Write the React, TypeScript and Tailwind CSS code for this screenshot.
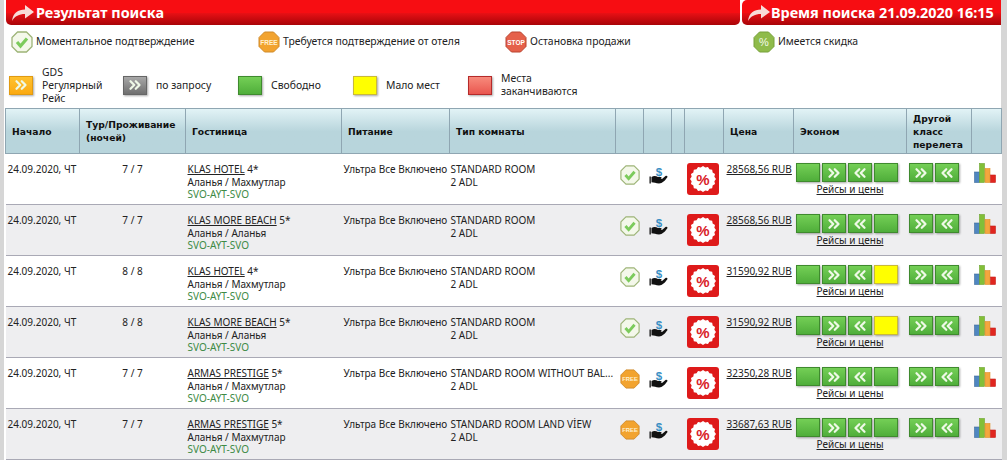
import { ChevronsLeft, ChevronsRight } from "lucide-react";

type Row = {
  nights: string;
  hotel: string;
  stars: string;
  area: string;
  room: string;
  status: "ok" | "free";
  price: string;
  last: "green" | "yellow";
};

const rows: Row[] = [
  { nights: "7 / 7", hotel: "KLAS HOTEL", stars: "4*", area: "Аланья / Махмутлар", room: "STANDARD ROOM", status: "ok", price: "28568,56 RUB", last: "green" },
  { nights: "7 / 7", hotel: "KLAS MORE BEACH", stars: "5*", area: "Аланья / Аланья", room: "STANDARD ROOM", status: "ok", price: "28568,56 RUB", last: "green" },
  { nights: "8 / 8", hotel: "KLAS HOTEL", stars: "4*", area: "Аланья / Махмутлар", room: "STANDARD ROOM", status: "ok", price: "31590,92 RUB", last: "yellow" },
  { nights: "8 / 8", hotel: "KLAS MORE BEACH", stars: "5*", area: "Аланья / Аланья", room: "STANDARD ROOM", status: "ok", price: "31590,92 RUB", last: "yellow" },
  { nights: "7 / 7", hotel: "ARMAS PRESTIGE", stars: "5*", area: "Аланья / Махмутлар", room: "STANDARD ROOM WITHOUT BAL...", status: "free", price: "32350,28 RUB", last: "green" },
  { nights: "7 / 7", hotel: "ARMAS PRESTIGE", stars: "5*", area: "Аланья / Махмутлар", room: "STANDARD ROOM LAND VİEW", status: "free", price: "33687,63 RUB", last: "green" },
];

const octagon = "6.5,1 15.5,1 21,6.5 21,15.5 15.5,21 6.5,21 1,15.5 1,6.5";

function scallop() {
  const pts: string[] = [];
  for (let i = 0; i < 32; i++) {
    const r = i % 2 === 0 ? 13 : 11.6;
    const a = (i / 32) * Math.PI * 2;
    pts.push(`${(16 + r * Math.cos(a)).toFixed(2)},${(16 + r * Math.sin(a)).toFixed(2)}`);
  }
  return pts.join(" ");
}

function HeaderArrow() {
  return (
    <svg width="24" height="18" viewBox="0 0 24 18" className="shrink-0">
      <path d="M1 17C2 9 7 5.500 14 5.500V1L23 8L14 14.500V10C8 10 4 12 1 17Z" fill="#f8dcd8" />
    </svg>
  );
}

function CheckIcon({ size = 22 }: { size?: number }) {
  return (
    <svg width={size} height={size} viewBox="0 0 22 22" className="shrink-0">
      <polygon points={octagon} fill="#f4f8ea" stroke="#9db477" strokeWidth="1.300" strokeLinejoin="round" />
      <path d="M6 11L9.500 15L16 7.500" fill="none" stroke="#7ccb5c" strokeWidth="3.200" />
    </svg>
  );
}

function FreeIcon({ size = 22 }: { size?: number }) {
  return (
    <svg width={size} height={size} viewBox="0 0 22 22" className="shrink-0">
      <polygon points={octagon} fill="#f2a32f" stroke="#cf8a2a" strokeLinejoin="round" />
      <text x="11" y="13.500" textAnchor="middle" fontSize="6.500" fontWeight="700" fill="#fff1cf" fontFamily="'Liberation Sans', sans-serif">FREE</text>
    </svg>
  );
}

function StopIcon() {
  return (
    <svg width="22" height="22" viewBox="0 0 22 22" className="shrink-0">
      <polygon points={octagon} fill="#e5604a" stroke="#b9432f" strokeLinejoin="round" />
      <text x="11" y="13.500" textAnchor="middle" fontSize="6.500" fontWeight="700" fill="#fff" fontFamily="'Liberation Sans', sans-serif">STOP</text>
    </svg>
  );
}

function PercentIcon() {
  return (
    <svg width="22" height="22" viewBox="0 0 22 22" className="shrink-0">
      <polygon points={octagon} fill="#8fbb4a" stroke="#77a03a" strokeLinejoin="round" />
      <text x="11" y="15" textAnchor="middle" fontSize="11" fill="#f4fae8" fontFamily="'Liberation Sans', sans-serif">%</text>
    </svg>
  );
}

function HandIcon() {
  return (
    <svg width="19" height="19" viewBox="0 0 19 19" className="shrink-0">
      <text x="10" y="9.500" textAnchor="middle" fontSize="11.500" fontWeight="700" fill="#3a8fc4" fontFamily="'Liberation Sans', sans-serif">$</text>
      <rect x="0.500" y="10.500" width="1.300" height="7" fill="#111" />
      <path d="M2.500 11C5 9.500 7 10 9 11L11.500 11C13 11 13 12.800 11.500 12.800L13 13L16.500 10C18 9.300 19 10.500 18.200 11.600C16 14.500 13.500 17.500 10 17.500C7 17.500 5 16.300 2.500 16.300Z" fill="#111" />
    </svg>
  );
}

function DiscountBadge() {
  return (
    <svg width="32" height="32" viewBox="0 0 32 32" className="shrink-0">
      <rect width="32" height="32" rx="3" fill="#de1a1a" />
      <polygon points={scallop()} fill="#fff" />
      <text x="16" y="21.500" textAnchor="middle" fontSize="15" fontWeight="700" fill="#d9222a" fontFamily="'Liberation Sans', sans-serif">%</text>
    </svg>
  );
}

function ChartIcon() {
  return (
    <svg width="22" height="20" viewBox="0 0 22 20" className="shrink-0">
      <rect x="0.500" y="9" width="5" height="10.500" fill="#4f86c0" stroke="#3c6a9c" strokeWidth="0.600" />
      <rect x="5.500" y="0.500" width="5" height="19" fill="#82bf38" stroke="#6aa32c" strokeWidth="0.600" />
      <rect x="11" y="5.500" width="5" height="14" fill="#f4a63e" stroke="#e08f2a" strokeWidth="0.600" />
      <rect x="16.500" y="12" width="5" height="7.500" fill="#e0261f" stroke="#c81f1a" strokeWidth="0.600" />
    </svg>
  );
}

function Box({ color, dir }: { color: "green" | "yellow" | "orange" | "gray" | "red"; dir?: "r" | "l" }) {
  const look = {
    green: "border-[#3f8a2e] bg-gradient-to-b from-[#74cf56] to-[#4fae3a]",
    yellow: "border-[#c9b93a] bg-[#ffff00]",
    orange: "border-[#e09a12] bg-gradient-to-b from-[#ffc22e] to-[#fba90f]",
    gray: "border-[#666666] bg-gradient-to-b from-[#a8a8a8] to-[#6f6f6f]",
    red: "border-[#b52a2a] bg-gradient-to-b from-[#f78a7c] to-[#e9554f]",
  }[color];
  return (
    <span className={`flex h-[19px] w-6 shrink-0 items-center justify-center border shadow-[1px_1px_2px_rgba(0,0,0,0.35)] ${look}`}>
      {dir === "r" && <ChevronsRight size={18} strokeWidth={3} className="shrink-0 text-[#eef9e6]" />}
      {dir === "l" && <ChevronsLeft size={18} strokeWidth={3} className="shrink-0 text-[#eef9e6]" />}
    </span>
  );
}

function Legend({ icon, children }: { icon: React.ReactNode; children: React.ReactNode }) {
  return (
    <div className="flex items-center gap-[3px]">
      {icon}
      <span>{children}</span>
    </div>
  );
}

function Swatch({ color, dir, children }: { color: "green" | "yellow" | "orange" | "gray" | "red"; dir?: "r"; children: React.ReactNode }) {
  return (
    <div className="flex items-center gap-[9px]">
      <Box color={color} dir={dir} />
      <span className="leading-[13px]">{children}</span>
    </div>
  );
}

const th = "border border-[#8fa6b2] px-[6px] text-left align-middle font-['DejaVu_Sans',sans-serif] text-[9.2px] font-bold";
const td = "border-y border-[#a9a9b5] align-top";
const band = "bg-[linear-gradient(#f70d12_0,#f70d12_50%,#e81015_52%,#a90408_100%)]";

export default function App() {
  return (
    <div className="h-[460px] w-[1007px] overflow-hidden bg-[#d6d6d6] pl-[4px] pr-[6px] font-['Noto_Sans',sans-serif] text-[10px] text-[#222]">
      <div className="h-full bg-white">
        <div className="flex h-[25px] gap-[2px] pl-[2px] font-['Noto_Sans',sans-serif] text-[14.400px] font-bold whitespace-nowrap text-white">
          <div className={`flex w-[734px] shrink-0 items-center gap-[1px] rounded-b-[5px] pl-[5px] ${band}`}>
            <HeaderArrow />
            Результат поиска
          </div>
          <div className={`flex min-w-0 flex-1 items-center rounded-l-[5px] pl-[5px] ${band}`}>
            <HeaderArrow />
            Время поиска 21.09.2020 16:15
          </div>
        </div>

        <div className="grid h-[33px] grid-cols-[247px_247px_248px_1fr] items-center pl-[7px] text-[10.400px]">
          <Legend icon={<CheckIcon />}>Моментальное подтверждение</Legend>
          <Legend icon={<FreeIcon />}>Требуется подтверждение от отеля</Legend>
          <Legend icon={<StopIcon />}>Остановка продажи</Legend>
          <Legend icon={<PercentIcon />}>Имеется скидка</Legend>
        </div>

        <div className="grid h-[50px] grid-cols-[114px_115px_115px_115px_1fr] items-center pt-[4px] pl-[5px] text-[10.400px]">
          <Swatch color="orange" dir="r">GDS<br />Регулярный<br />Рейс</Swatch>
          <Swatch color="gray" dir="r">по запросу</Swatch>
          <Swatch color="green">Свободно</Swatch>
          <Swatch color="yellow">Мало мест</Swatch>
          <Swatch color="red">Места<br />заканчиваются</Swatch>
        </div>

        <table className="ml-[1px] w-[996px] table-fixed border-collapse">
          <colgroup>
            <col className="w-[74px]" />
            <col className="w-[106px]" />
            <col className="w-[156px]" />
            <col className="w-[108px]" />
            <col className="w-[166px]" />
            <col className="w-[28px]" />
            <col className="w-[28px]" />
            <col className="w-[13px]" />
            <col className="w-[39px]" />
            <col className="w-[70px]" />
            <col className="w-[113px]" />
            <col className="w-[65px]" />
            <col className="w-[30px]" />
          </colgroup>
          <thead>
            <tr className="h-[45px] bg-gradient-to-b from-[#e2f3f6] via-[#b8d5dc] to-[#b8d5dc] leading-[13px] text-[#111]">
              <th className={th}>Начало</th>
              <th className={th}>Тур/Проживание<br />(ночей)</th>
              <th className={th}>Гостиница</th>
              <th className={th}>Питание</th>
              <th className={th}>Тип комнаты</th>
              <th className={th}></th>
              <th className={th}></th>
              <th className={th}></th>
              <th className={th}></th>
              <th className={th}>Цена</th>
              <th className={th}>Эконом</th>
              <th className={th}>Другой класс перелета</th>
              <th className={th}></th>
            </tr>
          </thead>
          <tbody>
            {rows.map((r, i) => (
              <tr key={i} className={`h-[51px] leading-[12.500px] ${i % 2 === 1 ? "bg-[#eeeef0]" : "bg-white"}`}>
                <td className={`${td} pt-[9px] pl-[2px] whitespace-nowrap`}>24.09.2020, ЧТ</td>
                <td className={`${td} pt-[9px] text-center`}>{r.nights}</td>
                <td className={`${td} pt-[9px] pl-[2px] whitespace-nowrap`}>
                  <div><span className="underline">{r.hotel}</span> {r.stars}</div>
                  <div>{r.area}</div>
                  <div className="text-[#3d8a45]">SVO-AYT-SVO</div>
                </td>
                <td className={`${td} pt-[9px] pl-[2px] whitespace-nowrap`}>Ультра Все Включено</td>
                <td className={`${td} pt-[9px] pl-[1px] whitespace-nowrap`}>
                  <div>{r.room}</div>
                  <div>2 ADL</div>
                </td>
                <td className={`${td} pt-[11px] pl-[4px]`}>{r.status === "ok" ? <CheckIcon size={20} /> : <FreeIcon size={20} />}</td>
                <td className={`${td} pt-[12px] pl-[5px]`}><HandIcon /></td>
                <td className={td}></td>
                <td className={`${td} pt-[9px] pl-[2px]`}><DiscountBadge /></td>
                <td className={`${td} pt-[9px] pl-[3px] whitespace-nowrap underline`}>{r.price}</td>
                <td className={`${td} pt-[9px] pl-[2px]`}>
                  <div className="flex gap-[2px]">
                    <Box color="green" />
                    <Box color="green" dir="r" />
                    <Box color="green" dir="l" />
                    <Box color={r.last} />
                  </div>
                  <div className="mt-[1px] pr-[2px] text-center underline">Рейсы и цены</div>
                </td>
                <td className={`${td} pt-[9px] pl-[2px]`}>
                  <div className="flex gap-[2px]">
                    <Box color="green" dir="r" />
                    <Box color="green" dir="l" />
                  </div>
                </td>
                <td className={`${td} pt-[9px] pl-[2px]`}><ChartIcon /></td>
              </tr>
            ))}
          </tbody>
        </table>
      </div>
    </div>
  );
}
